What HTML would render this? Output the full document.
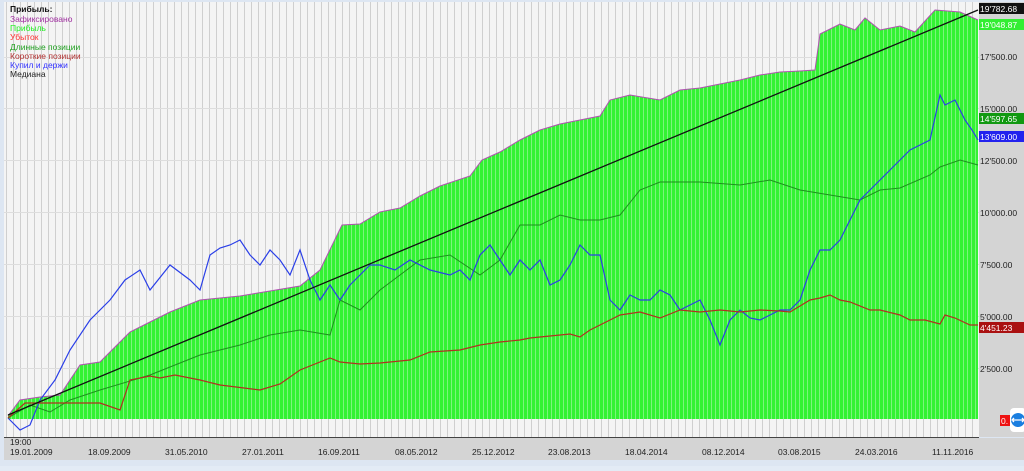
<!DOCTYPE html>
<html><head><meta charset="utf-8"><style>
body{margin:0;width:1024px;height:466px;overflow:hidden;background:#e3ebf5;font-family:"Liberation Sans","DejaVu Sans",sans-serif}
</style></head><body>
<svg width="1024" height="466" xmlns="http://www.w3.org/2000/svg" font-family="Liberation Sans, DejaVu Sans, sans-serif">
<defs>
<pattern id="bg" width="7" height="466" patternUnits="userSpaceOnUse"><rect width="7" height="466" fill="#f4f4f4"/><rect x="6" width="1" height="466" fill="#cfcfcf"/></pattern>
<pattern id="gr" width="4" height="466" patternUnits="userSpaceOnUse"><rect width="4" height="466" fill="#33f233"/><rect x="3" width="1" height="466" fill="#7cf57c"/></pattern>
</defs>
<rect x="0" y="0" width="1024" height="466" fill="#dde6f2"/>
<rect x="4" y="2" width="975" height="435" fill="url(#bg)"/>
<g stroke="#dddddd" stroke-width="1"><line x1="4" y1="57.5" x2="979" y2="57.5"/><line x1="4" y1="108.5" x2="979" y2="108.5"/><line x1="4" y1="160.5" x2="979" y2="160.5"/><line x1="4" y1="212.5" x2="979" y2="212.5"/><line x1="4" y1="264.5" x2="979" y2="264.5"/><line x1="4" y1="316.5" x2="979" y2="316.5"/><line x1="4" y1="368.5" x2="979" y2="368.5"/></g>
<polygon fill="url(#gr)" points="8,419 8,416 20,400 40,397 60,395 80,365 100,362 130,332 150,322 170,312 200,300 240,296 270,291 300,286 320,270 342,225 360,224 380,212 400,208 420,196 440,186 470,176 482,160 500,152 520,140 540,130 560,124 580,120 600,116 610,100 630,95 660,100 680,90 700,88 720,84 740,80 760,75 780,72 800,71 815,70 820,34 840,24 855,30 865,18 880,30 900,26 915,32 935,10 960,12 978,20 978,419"/>
<polyline fill="none" stroke="#b050b0" stroke-width="1" points="8,416 20,400 40,397 60,395 80,365 100,362 130,332 150,322 170,312 200,300 240,296 270,291 300,286 320,270 342,225 360,224 380,212 400,208 420,196 440,186 470,176 482,160 500,152 520,140 540,130 560,124 580,120 600,116 610,100 630,95 660,100 680,90 700,88 720,84 740,80 760,75 780,72 800,71 815,70 820,34 840,24 855,30 865,18 880,30 900,26 915,32 935,10 960,12 978,20"/>
<polyline fill="none" stroke="#1e8f1e" stroke-width="1" points="8,418 30,405 50,412 70,400 100,390 150,375 200,355 240,345 270,335 300,330 330,335 340,300 360,310 380,290 400,275 420,260 450,255 480,275 500,260 520,225 540,225 560,215 580,220 600,220 620,215 640,190 660,182 700,182 740,185 770,180 800,190 830,195 860,200 880,190 900,188 930,175 940,167 960,160 978,165"/>
<polyline fill="none" stroke="#2a3fe8" stroke-width="1.2" points="8,418 20,430 30,425 40,400 55,380 70,350 90,320 110,300 125,280 140,270 150,290 170,265 190,280 200,290 210,255 220,248 230,245 240,240 250,255 260,265 270,250 280,260 290,275 300,250 310,280 320,300 330,285 340,300 350,285 360,275 370,265 380,265 395,270 410,260 430,270 450,275 460,270 470,280 480,255 490,245 500,260 510,275 520,260 530,270 540,260 550,285 560,280 570,265 580,245 590,255 600,255 610,300 620,310 630,295 640,300 650,300 660,290 670,295 680,310 690,305 700,300 710,320 720,345 730,320 740,310 750,318 760,320 770,315 780,310 790,310 800,300 810,270 820,250 830,250 840,240 850,220 860,200 870,190 880,180 890,170 900,160 910,150 920,145 930,140 940,95 945,105 955,100 965,120 972,130 978,140"/>
<polyline fill="none" stroke="#b03020" stroke-width="1.2" points="8,418 15,412 25,403 60,403 100,403 120,410 130,380 150,376 160,378 175,375 200,380 220,385 260,390 280,384 300,370 330,358 340,362 360,364 380,363 390,362 410,360 430,352 460,350 480,345 500,342 520,340 530,338 550,336 570,334 580,337 590,330 600,325 610,320 620,315 640,312 660,318 680,310 700,312 720,310 740,312 760,310 780,311 790,312 800,306 810,300 820,298 830,295 840,300 850,302 870,310 880,310 900,315 910,320 925,320 940,324 945,315 955,318 970,325 978,325"/>
<line x1="8" y1="415" x2="978" y2="10" stroke="#111" stroke-width="1.3"/>
<rect x="979" y="2" width="45" height="435" fill="#d4d4d4"/>
<line x1="4" y1="437.5" x2="979" y2="437.5" stroke="#444"/>
<rect x="4" y="438" width="1020" height="22" fill="#d4d4d4"/>
<g font-size="8.5" fill="#222">
<text x="10" y="12" font-weight="bold" fill="#111">Прибыль:</text>
<text x="10" y="22" fill="#a030a0">Зафиксировано</text>
<text x="10" y="31" fill="#22ee22">Прибыль</text>
<text x="10" y="40" fill="#ff3030">Убыток</text>
<text x="10" y="50" fill="#20a020">Длинные позиции</text>
<text x="10" y="59" fill="#b03030">Короткие позиции</text>
<text x="10" y="68" fill="#3030ff">Купил и держи</text>
<text x="10" y="77" fill="#222">Медиана</text>
<text x="10" y="445">19:00</text>
<text x="10" y="455">19.01.2009</text><text x="88" y="455">18.09.2009</text><text x="165" y="455">31.05.2010</text><text x="242" y="455">27.01.2011</text><text x="318" y="455">16.09.2011</text><text x="395" y="455">08.05.2012</text><text x="472" y="455">25.12.2012</text><text x="548" y="455">23.08.2013</text><text x="625" y="455">18.04.2014</text><text x="702" y="455">08.12.2014</text><text x="778" y="455">03.08.2015</text><text x="855" y="455">24.03.2016</text><text x="932" y="455">11.11.2016</text>
<text x="980" y="60">17'500.00</text><text x="980" y="112">15'000.00</text><text x="980" y="164">12'500.00</text><text x="980" y="216">10'000.00</text><text x="980" y="268">7'500.00</text><text x="980" y="320">5'000.00</text><text x="980" y="372">2'500.00</text>
</g>
<g font-size="8.5">
<rect x="979" y="3" width="45" height="11" fill="#111"/><text x="980" y="12" fill="#fff">19'782.68</text>
<rect x="979" y="19" width="45" height="11" fill="#33ee33"/><text x="980" y="28" fill="#fff">19'048.87</text>
<rect x="979" y="113" width="45" height="11" fill="#119911"/><text x="980" y="122" fill="#fff">14'597.65</text>
<rect x="979" y="131" width="45" height="11" fill="#2222ee"/><text x="980" y="140" fill="#fff">13'609.00</text>
<rect x="979" y="322" width="45" height="11" fill="#aa1111"/><text x="980" y="331" fill="#fff">4'451.23</text>
<rect x="1000" y="415" width="10" height="11" fill="#ee1111"/><text x="1001" y="424" fill="#fff">0.</text>
</g>
<rect x="1010" y="408" width="16" height="24" rx="4" fill="#fff"/>
<circle cx="1018" cy="420" r="7" fill="#1a7ee0"/><path d="M1013 420h10M1014 418l-2 2 2 2M1022 418l2 2-2 2" stroke="#fff" stroke-width="1.3" fill="none"/>
</svg>
</body></html>
